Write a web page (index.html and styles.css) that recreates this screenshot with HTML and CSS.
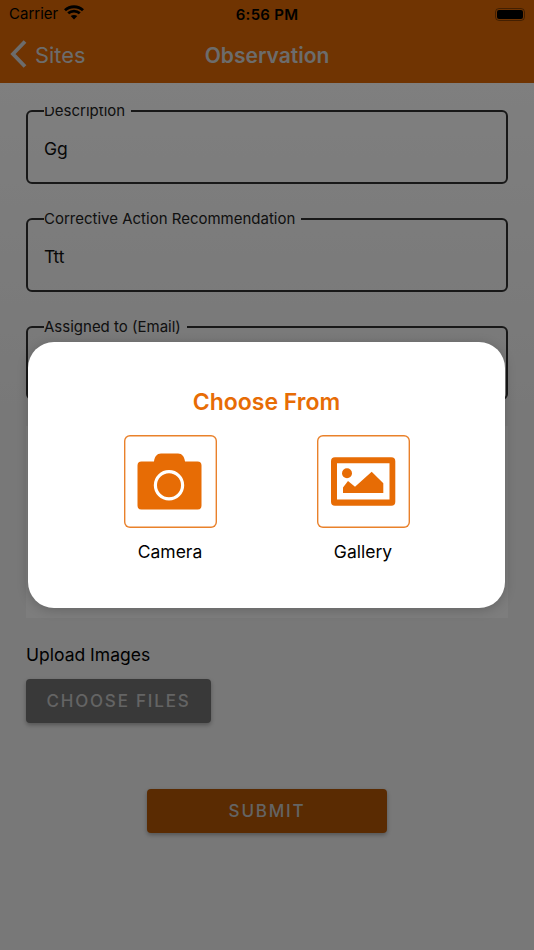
FILE: index.html
```html
<!DOCTYPE html>
<html lang="en">
<head>
<meta charset="utf-8">
<title>Observation</title>
<link rel="stylesheet" href="styles.css">
</head>
<body>
<div class="app">
  <header class="top">
    <div class="status">
      <div class="status-left">
        <span class="carrier">Carrier</span>
        <svg class="wifi" width="20" height="15" viewBox="0 0 20 15" aria-hidden="true">
          <path d="M1 5.2C5.9 .6 14.1 .6 19 5.2" />
          <path d="M4.2 8.3C7.5 5.3 12.5 5.3 15.8 8.3" />
          <path class="wifi-dot" d="M10 14.6 6.7 11.1C8.6 9.6 11.4 9.6 13.3 11.1Z" />
        </svg>
      </div>
      <span class="clock">6:56 PM</span>
      <div class="battery"><span class="battery-fill"></span></div>
    </div>
    <nav class="nav">
      <a class="back">
        <svg width="18" height="28" viewBox="0 0 18 28" aria-hidden="true"><path d="M15 1.500 3 14l12 12.500" /></svg>
        <span>Sites</span>
      </a>
      <h1 class="nav-title">Observation</h1>
    </nav>
  </header>

  <main class="content">
    <div class="scroll">
      <fieldset class="field">
        <legend>Description</legend>
        <div class="value">Gg</div>
      </fieldset>
      <fieldset class="field">
        <legend>Corrective Action Recommendation</legend>
        <div class="value">Ttt</div>
      </fieldset>
      <fieldset class="field">
        <legend>Assigned to (Email)</legend>
        <div class="value"></div>
      </fieldset>
      <div class="preview"></div>
      <p class="upload-label">Upload Images</p>
      <button class="btn btn-files" type="button">Choose Files</button>
      <div class="submit-row">
        <button class="btn btn-submit" type="button">Submit</button>
      </div>
    </div>
  </main>

  <div class="overlay">
    <section class="modal">
      <h2 class="modal-title">Choose From</h2>
      <div class="options">
        <div class="option">
          <div class="tile">
            <svg width="66" height="58" viewBox="0 0 66 58" aria-hidden="true">
              <path class="fill" d="M4.5 8.5H17C17.6 3.5 20 .5 24 .5H41C45 .5 47.4 3.500 48 8.500H60.500A4 4 0 0 1 64.500 12.500V52.500A4 4 0 0 1 60.500 56.500H4.500A4 4 0 0 1 .5 52.500V12.500A4 4 0 0 1 4.500 8.500Z" />
              <circle class="ring" cx="32" cy="32.300" r="13.600" />
            </svg>
          </div>
          <span class="option-label">Camera</span>
        </div>
        <div class="option">
          <div class="tile">
            <svg width="65" height="49" viewBox="0 0 65 49" aria-hidden="true">
              <path class="fill" fill-rule="evenodd" d="M4 .3H60.300A4 4 0 0 1 64.300 4.300V44.700A4 4 0 0 1 60.300 48.700H4A4 4 0 0 1 0 44.700V4.300A4 4 0 0 1 4 .3ZM6 6.300V42.500H58.500V6.300Z" />
              <circle class="fill" cx="16" cy="16.300" r="5" />
              <path class="fill" d="M12 36V30.500L17 24 24 29.700 40.700 14.700 52.300 26.300V36Z" />
            </svg>
          </div>
          <span class="option-label">Gallery</span>
        </div>
      </div>
    </section>
  </div>
</div>
</body>
</html>
```

FILE: styles.css
```css
* { box-sizing: border-box; }

html, body {
  margin: 0;
  height: 100%;
}

body {
  font-family: Inter, "Noto Sans", sans-serif;
  color: #000;
  background: #f2f2f2;
}

.app {
  position: relative;
  height: 950px;
  overflow: hidden;
  display: flex;
  flex-direction: column;
}

.top {
  height: 83px;
  flex: none;
  background: #e06905;
}

.status {
  height: 28px;
  padding: 0 9px;
  display: grid;
  grid-template-columns: 1fr auto 1fr;
  align-items: center;
}

.status-left {
  display: flex;
  align-items: center;
  gap: 6px;
}

.carrier {
  font-size: 15px;
  line-height: 28px;
}

.wifi {
  margin-top: -3px;
}

.wifi path {
  fill: none;
  stroke: #000;
  stroke-width: 2.800;
}

.wifi .wifi-dot {
  fill: #000;
  stroke: none;
}

.clock {
  font-size: 15px;
  font-weight: 600;
  letter-spacing: .25px;
}

.battery {
  justify-self: end;
  width: 30px;
  height: 13px;
  border: 1px solid rgba(0, 0, 0, .4);
  border-radius: 4px;
  padding: 1px;
  display: flex;
}

.battery-fill {
  flex: 1;
  background: #000;
  border-radius: 2px;
}

.nav {
  position: relative;
  height: 55px;
  display: flex;
  align-items: center;
  justify-content: center;
}

.back {
  position: absolute;
  left: 10px;
  top: 0;
  height: 54px;
  display: flex;
  align-items: center;
  gap: 7px;
  color: #d8d8d8;
  font-size: 21.800px;
}

.back svg {
  fill: none;
  stroke: #d8d8d8;
  stroke-width: 3.800;
  margin-top: -2px;
}

.nav-title {
  margin: -1px 0 0;
  color: #d8d8d8;
  font-size: 21px;
  font-weight: 600;
}

.content {
  flex: 1;
  padding-top: 24px;
  min-height: 0;
  background: linear-gradient(#fefefe, #f0f0f0 40%);
}

.scroll {
  height: 100%;
  overflow: hidden;
  padding: 0 26px;
}

.field {
  margin: 0 0 26px;
  padding: 0 16px;
  height: 82px;
  border: 2px solid #303030;
  border-radius: 6px;
  min-width: 0;
}

.field:first-child {
  margin-top: -5px;
}

.field legend {
  padding: 0 6px 0 0;
  font-size: 15px;
  line-height: 17px;
  color: #222;
}

.value {
  font-size: 17.500px;
  line-height: 22px;
  padding-top: 19px;
  color: #111;
}

.preview {
  height: 192px;
  background: #fbfbfb;
}

.upload-label {
  margin: 26px 0 13px;
  font-size: 17.500px;
  line-height: 22px;
}

.btn {
  display: block;
  border: 0;
  border-radius: 4px;
  height: 44px;
  padding: 0;
  color: #c8c8c8;
  font-family: inherit;
  font-size: 17px;
  font-weight: 500;
  letter-spacing: 1.800px;
  text-transform: uppercase;
  box-shadow: 0 2px 4px rgba(0, 0, 0, .3);
}

.btn-files {
  width: 185px;
  background: #727272;
}

.submit-row {
  margin-top: 66px;
  display: flex;
  justify-content: center;
}

.btn-submit {
  width: 240px;
  background: #b45604;
}

.overlay {
  position: absolute;
  inset: 0;
  padding-right: 1px;
  display: flex;
  align-items: center;
  justify-content: center;
  background: rgba(0, 0, 0, .5);
}

.modal {
  width: 477px;
  height: 266px;
  padding-top: 46px;
  background: #fff;
  border-radius: 26px;
  box-shadow: 0 2px 12px rgba(0, 0, 0, .2);
}

.modal-title {
  margin: 0 0 19px;
  text-align: center;
  color: #e76c05;
  font-size: 23px;
  line-height: 28px;
  font-weight: 600;
}

.options {
  display: grid;
  grid-template-columns: 193px 193px;
  justify-content: center;
}

.option {
  display: flex;
  flex-direction: column;
  align-items: center;
  gap: 13px;
}

.tile {
  width: 93px;
  height: 93px;
  border-radius: 6px;
  box-shadow: inset 0 0 0 1.400px #e9812b;
  display: flex;
  align-items: center;
  justify-content: center;
}

.fill {
  fill: #e76c05;
}

.ring {
  fill: none;
  stroke: #fff;
  stroke-width: 3.200;
}

.option-label {
  font-size: 17.500px;
  line-height: 21px;
}
```
